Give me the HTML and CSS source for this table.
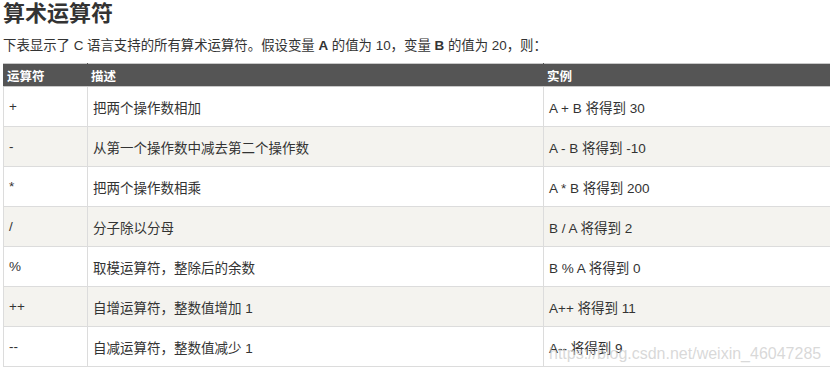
FILE: index.html
```html
<!DOCTYPE html>
<html lang="zh">
<head>
<meta charset="utf-8">
<link rel="stylesheet" href="styles.css">
</head>
<body>
<div class="page">
  <h2 class="title">算术运算符</h2>
  <p class="intro">下表显示了 C 语言支持的所有算术运算符。假设变量 <b>A</b> 的值为 10，变量 <b>B</b> 的值为 20，则：</p>
  <table class="ops">
    <thead>
      <tr><th class="c1">运算符</th><th class="c2">描述</th><th class="c3">实例</th></tr>
    </thead>
    <tbody>
      <tr><td>+</td><td>把两个操作数相加</td><td>A + B 将得到 30</td></tr>
      <tr><td>-</td><td>从第一个操作数中减去第二个操作数</td><td>A - B 将得到 -10</td></tr>
      <tr><td>*</td><td>把两个操作数相乘</td><td>A * B 将得到 200</td></tr>
      <tr><td>/</td><td>分子除以分母</td><td>B / A 将得到 2</td></tr>
      <tr><td>%</td><td>取模运算符，整除后的余数</td><td>B % A 将得到 0</td></tr>
      <tr><td>++</td><td>自增运算符，整数值增加 1</td><td>A++ 将得到 11</td></tr>
      <tr><td>--</td><td>自减运算符，整数值减少 1</td><td>A-- 将得到 9</td></tr>
    </tbody>
  </table>
</div>
<div class="watermark">https://blog.csdn.net/weixin_46047285</div>
</body>
</html>
```

FILE: styles.css
```css
html, body {
  margin: 0;
  padding: 0;
  background: #fff;
  overflow: hidden;
}
body {
  width: 830px;
  height: 376px;
  position: relative;
  font-family: "Liberation Sans", Arial, "Noto Sans CJK SC", sans-serif;
  color: #333;
}
.page {
  padding: 1px 0 0 3px;
}
.title {
  margin: 0;
  font-size: 22px;
  line-height: 25px;
  font-weight: bold;
  color: #333;
}
.intro {
  margin: 11px 0 0 0;
  font-size: 13.4px;
  line-height: 18px;
  color: #333;
}
.intro b {
  font-weight: bold;
}
.ops {
  margin-top: 8px;
  border-collapse: collapse;
  width: 840px;
  table-layout: fixed;
  font-size: 13.5px;
}
.ops th {
  background: #555;
  color: #fff;
  font-size: 12.5px;
  font-weight: bold;
  text-align: left;
  height: 22px;
  padding: 0 3px;
  border: 1px solid #c9c9c9;
  border-left-color: #555;
  border-right-color: #555;
}
.ops th.c1 { width: 77px; }
.ops th.c2 { width: 449px; }
.ops td {
  height: 39px;
  padding: 0 5px;
  border: 1px solid #dcdcdc;
  color: #333;
  vertical-align: middle;
}
.ops tbody tr:nth-child(even) td {
  background: #f4f3ef;
}
.watermark {
  position: absolute;
  left: 549px;
  top: 345px;
  font-family: "Liberation Sans", Arial, sans-serif;
  font-size: 16px;
  color: rgba(200, 200, 200, 0.7);
  white-space: nowrap;
  pointer-events: none;
}
```
